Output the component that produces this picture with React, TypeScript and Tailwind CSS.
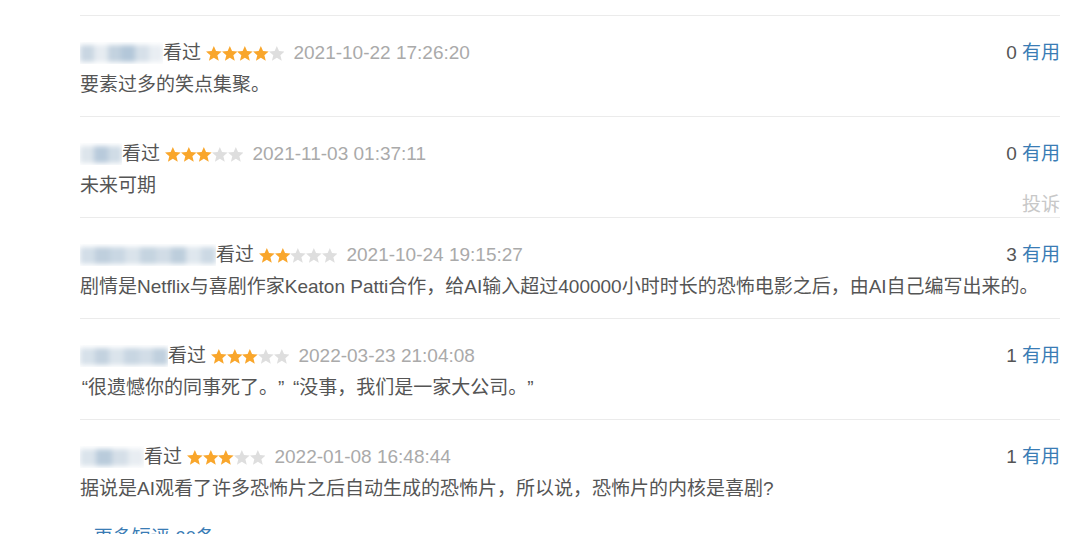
import React from "react";

const FONT = '"Liberation Sans", Arial, "Noto Sans CJK SC", sans-serif';

function Star({ on }: { on: boolean }) {
  return (
    <svg width="15.7" height="15" viewBox="0.5 0.5 23 22" className="block">
      <polygon
        points="12,0.5 15.2,8 23.5,8.6 17.2,14 19.2,22.3 12,17.8 4.8,22.3 6.8,14 0.5,8.6 8.8,8"
        fill={on ? "#f9a62b" : "#dedede"}
      />
    </svg>
  );
}

function Stars({ n }: { n: number }) {
  return (
    <div className="flex items-center">
      {[0, 1, 2, 3, 4].map((i) => (
        <Star key={i} on={i < n} />
      ))}
    </div>
  );
}

function BlurName({ w, tiles }: { w: number; tiles: string[] }) {
  return (
    <div className="relative h-[22px] overflow-hidden" style={{ width: w }}>
      <div className="absolute inset-x-0 top-[3px] h-[17px] flex blur-[2.5px]">
        {tiles.map((c, i) => (
          <div key={i} className="flex-1 h-full" style={{ background: c }} />
        ))}
      </div>
    </div>
  );
}

type Item = {
  w: number;
  tiles: string[];
  stars: number;
  date: string;
  useful: number;
  text: React.ReactNode;
  report?: boolean;
};

const QO = () => <span className="inline-block w-[8px] text-right">“</span>;
const QC = () => <span className="inline-block w-[8px] text-left">”</span>;

const items: Item[] = [
  {
    w: 83,
    tiles: ["#c9d6e2", "#e6ecf1", "#c3d2df", "#b3c7d9", "#d6e0e9", "#e9eef3"],
    stars: 4,
    date: "2021-10-22 17:26:20",
    useful: 0,
    text: "要素过多的笑点集聚。",
  },
  {
    w: 42,
    tiles: ["#dde5ec", "#b8cadb", "#d0dce6"],
    stars: 3,
    date: "2021-11-03 01:37:11",
    useful: 0,
    text: "未来可期",
    report: true,
  },
  {
    w: 136,
    tiles: ["#d3dee8", "#bfcfdd", "#c9d7e3", "#dae3eb", "#c5d4e0", "#d1dce6", "#bdcedc", "#dfe7ee", "#ccd9e4"],
    stars: 2,
    date: "2021-10-24 19:15:27",
    useful: 3,
    text: "剧情是Netflix与喜剧作家Keaton Patti合作，给AI输入超过400000小时时长的恐怖电影之后，由AI自己编写出来的。",
  },
  {
    w: 88,
    tiles: ["#d7e1ea", "#c3d2df", "#dbe4ec", "#c8d6e2", "#d2dde7", "#c0d0de"],
    stars: 3,
    date: "2022-03-23 21:04:08",
    useful: 1,
    text: (
      <>
        <QO />很遗憾你的同事死了。<QC /> <QO />没事，我们是一家大公司。<QC />
      </>
    ),
  },
  {
    w: 64,
    tiles: ["#dbe4ec", "#b9cbdb", "#d5dfe8", "#e8edf2"],
    stars: 3,
    date: "2022-01-08 16:48:44",
    useful: 1,
    text: "据说是AI观看了许多恐怖片之后自动生成的恐怖片，所以说，恐怖片的内核是喜剧?",
  },
];

export default function App() {
  return (
    <div
      className="w-[1080px] h-[534px] overflow-hidden bg-white text-[19px] text-[#555555]"
      style={{ fontFamily: FONT }}
    >
      <div className="ml-[80px] w-[980px] pt-[15px]">
        {items.map((it, idx) => (
          <div key={idx} className="relative h-[101px] border-t border-[#ebebeb] pt-[22px]">
            <div className="flex items-center h-[30px]">
              <BlurName w={it.w} tiles={it.tiles} />
              <span className="leading-[30px]">看过</span>
              <div className="ml-[5px]">
                <Stars n={it.stars} />
              </div>
              <span className="ml-[9px] text-[#aaaaaa] leading-[30px]">{it.date}</span>
              <span className="ml-auto leading-[30px]">
                <span className="text-[#555555]">{it.useful}</span>{" "}
                <span className="text-[#3a7cb5]">有用</span>
              </span>
            </div>
            <div className="leading-[31px] mt-px">{it.text}</div>
            {it.report && (
              <span className="absolute right-0 bottom-[0px] leading-[24px] text-[#c8c8c8]">投诉</span>
            )}
          </div>
        ))}
        <div className="pt-[3px] flex items-center leading-[30px]">
          <span className="text-[#999] text-[14px] mr-[8px] ml-[1px]">›</span>
          <span className="text-[#3a7cb5]">更多短评 60条</span>
        </div>
      </div>
    </div>
  );
}
